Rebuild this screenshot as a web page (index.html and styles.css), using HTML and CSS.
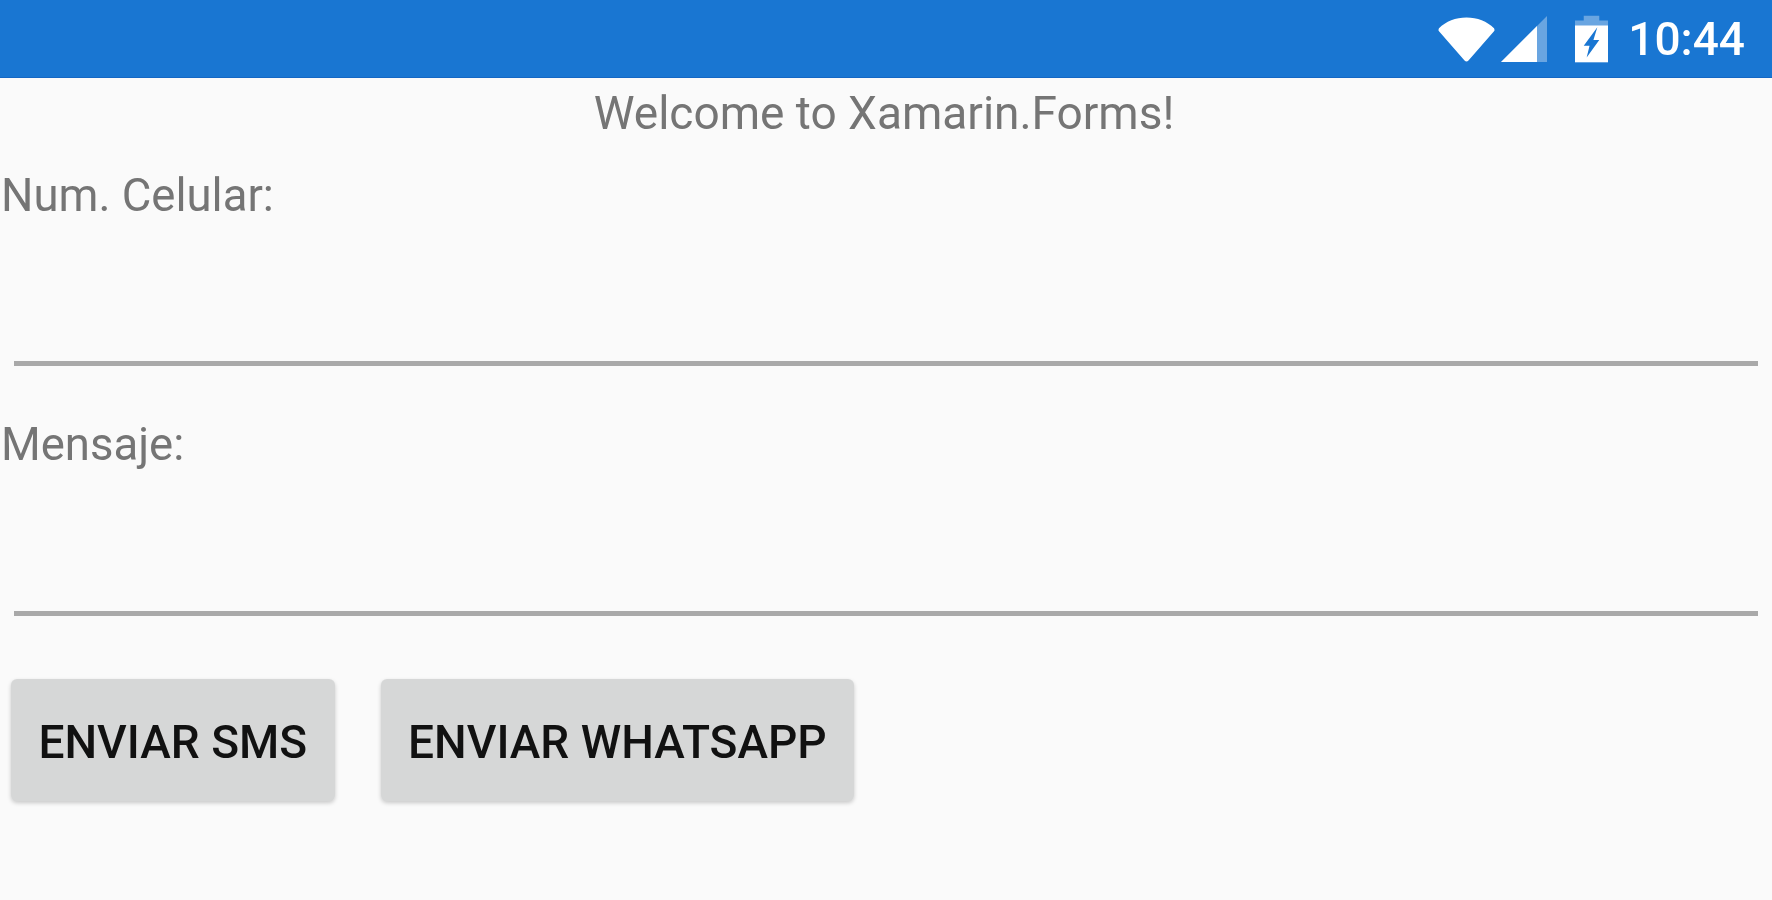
FILE: index.html
```html
<!DOCTYPE html>
<html lang="en">
<head>
    <meta charset="UTF-8">
    <title>Welcome to Xamarin.Forms!</title>
    <link rel="stylesheet" href="styles.css">
</head>
<body>
    <div class="status-bar">
        <svg class="icon-wifi" width="57" height="46" viewBox="0 0 58 46">
            <path d="M1 12 C8 5 18 1 29 1 C40 1 50 5 57 12 Q58 14 57 15 L31 45 Q29 47 27 45 L1 15 Q0 14 1 12 Z" fill="#fff"/>
        </svg>
        <svg class="icon-signal" width="46" height="46" viewBox="0 0 46 46">
            <path d="M0 46 L46 0 V46 Z" fill="#fff" opacity="0.35"/>
            <path d="M0 46 L36 10 V46 Z" fill="#fff"/>
        </svg>
        <svg class="icon-battery" width="33" height="48" viewBox="0 0 34 48">
            <path d="M9 5 V0 H25 V5 H34 V48 H0 V5 Z" fill="#fff" opacity="0.35"/>
            <path d="M0 10 H34 V48 H0 Z" fill="#fff"/>
            <path d="M23 12 L9 31 H15 L12 43 L25 25 H19 Z" fill="#1976d2"/>
        </svg>
        <span class="clock">10:44</span>
    </div>

    <div class="page">
        <p class="welcome">Welcome to Xamarin.Forms!</p>
        <label class="field-label">Num. Celular:</label>
        <div class="entry"></div>
        <label class="field-label field-label-next">Mensaje:</label>
        <div class="entry"></div>
        <div class="buttons">
            <button class="btn">ENVIAR SMS</button>
            <button class="btn">ENVIAR WHATSAPP</button>
        </div>
    </div>
</body>
</html>
```
FILE: styles.css
```css
/* General Styles */
html, body {
    margin: 0;
    padding: 0;
    height: 900px;
    overflow: hidden;
}

body {
    font-family: Roboto, 'Liberation Sans', sans-serif;
    background: #fafafa;
}

.status-bar {
    height: 78px;
    background: #1976d2;
    display: flex;
    align-items: center;
    justify-content: flex-end;
    padding-right: 27px;
    box-sizing: border-box;
    border-bottom: 1px solid #1467c4;
}

.icon-wifi {
    margin-right: 6px;
}

.icon-signal {
    margin-right: 28px;
}

.icon-battery {
    margin-right: 20px;
}

.icon-wifi, .icon-signal, .icon-battery, .clock {
    filter: blur(0.6px);
}

.clock {
    color: #fff;
    font-size: 46px;
    font-weight: 500;
}

.page {
    padding-top: 9px;
}

.welcome, .field-label, .btn {
    filter: blur(0.7px);
}

.welcome {
    margin: 0;
    padding-right: 4px;
    text-align: center;
    color: #757575;
    font-size: 46px;
    line-height: 52px;
}

.field-label {
    display: block;
    margin: 31px 0 0 1px;
    color: #757575;
    font-size: 45.5px;
    line-height: 52px;
}

.field-label-next {
    margin-top: 53px;
}

.entry {
    height: 5px;
    margin: 139px 14px 0;
    background: #a9a9a9;
}

.field-label-next + .entry {
    margin-top: 140px;
}

.buttons {
    display: flex;
    gap: 46px;
    margin: 63px 0 0 11px;
}

.btn {
    height: 122px;
    padding: 4px 27.5px 0;
    border: none;
    border-radius: 6px;
    background: #d6d7d7;
    color: #111;
    font-family: Roboto, sans-serif;
    font-size: 46px;
    font-weight: 500;
    box-shadow: 0 2px 4px rgba(0, 0, 0, 0.2);
}
```
